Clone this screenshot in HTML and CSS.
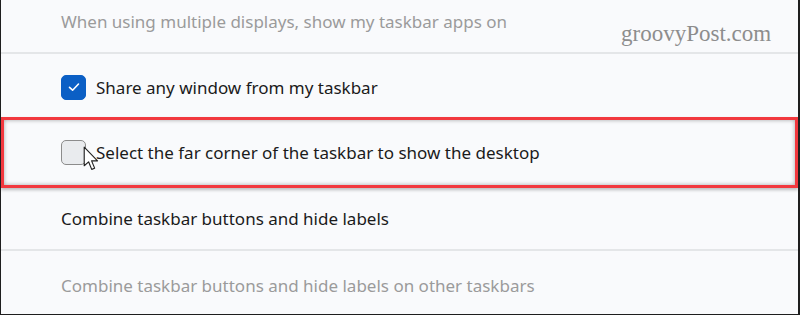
FILE: index.html
```html
<!DOCTYPE html>
<html>
<head>
<meta charset="utf-8">
<link rel="stylesheet" href="styles.css">
</head>
<body>
<div class="frame">
  <div class="row row-top muted">When using multiple displays, show my taskbar apps on</div>
  <div class="divider"></div>
  <div class="row row-check">
    <span class="box checked">
      <svg width="14" height="14" viewBox="0 0 14 14"><path d="M2.5 7.3 L5.6 10.2 L11.5 4" fill="none" stroke="#fff" stroke-width="1.6" stroke-linecap="round" stroke-linejoin="round"/></svg>
    </span>
    <span class="label">Share any window from my taskbar</span>
  </div>
  <div class="row row-hl">
    <span class="box"></span>
    <span class="label">Select the far corner of the taskbar to show the desktop</span>
    <svg class="cursor" width="17" height="26" viewBox="0 0 16 25"><path d="M1 1 L1 19 L5.2 15.2 L8.2 22.5 L11 21.3 L8.1 14.3 L13.8 14.3 Z" fill="#fff" stroke="#222" stroke-width="1.1" stroke-linejoin="round"/></svg>
  </div>
  <div class="row row-plain">Combine taskbar buttons and hide labels</div>
  <div class="divider"></div>
  <div class="row row-last muted">Combine taskbar buttons and hide labels on other taskbars</div>
  <div class="watermark">groovyPost.com</div>
</div>
</body>
</html>
```
FILE: styles.css
```css
html, body {
  margin: 0;
  padding: 0;
  background: #f9fafc;
}
.frame {
  position: relative;
  box-sizing: border-box;
  width: 800px;
  height: 315px;
  border-left: 1px solid #1e1e1e;
  border-right: 2px solid #1e1e1e;
  border-bottom: 1px solid #1e1e1e;
  background: #f9fafc;
  font-family: "Noto Sans", "Open Sans", sans-serif;
  font-size: 17px;
  color: #1b1b1b;
  overflow: hidden;
}
.row {
  display: flex;
  align-items: center;
  padding-left: 60px;
  box-sizing: border-box;
}
.muted { color: #9b9b9b; }
.row-top { height: 52px; padding-bottom: 10px; }
.divider { height: 2px; background: #e4e6e8; }
.row-check { height: 63px; padding-top: 3px; }
.row-hl {
  position: relative;
  height: 71px;
  border: 3px solid #f2383e;
  box-shadow: inset 0 0 4px rgba(0,0,0,0.35), 0 2px 3px rgba(0,0,0,0.25);
  padding-left: 57px;
}
.row-plain { height: 61px; }
.row-last { height: 63px; padding-top: 6px; }
.box {
  box-sizing: border-box;
  width: 25px;
  height: 25px;
  border-radius: 5px;
  border: 1px solid #8c8c8c;
  background: #e9ebee;
  margin-right: 10px;
  display: flex;
  align-items: center;
  justify-content: center;
  flex: none;
}
.box.checked {
  background: #0b5fc5;
  border-color: #0b5fc5;
}
.cursor {
  position: absolute;
  left: 79px;
  top: 26px;
}
.watermark {
  position: absolute;
  left: 620px;
  top: 21px;
  font-family: "Liberation Serif", serif;
  font-size: 23px;
  color: #8d8d8d;
}
```
